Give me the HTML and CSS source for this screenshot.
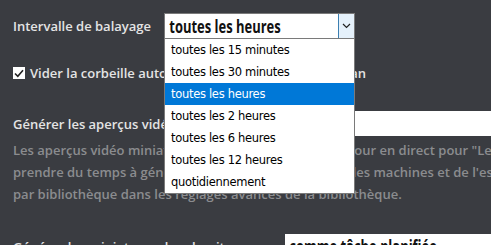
FILE: index.html
```html
<!DOCTYPE html>
<html lang="fr">
<head>
    <meta charset="UTF-8">
    <title>Bibliothèque</title>
    <link rel="stylesheet" href="styles.css">
</head>
<body>
    <div class="settings">
        <div class="row row-interval">
            <label class="label">Intervalle de balayage</label>
            <div class="select select-interval">
                <span class="select-value">toutes les heures</span>
                <span class="select-arrow">
                    <svg width="9" height="6" viewBox="0 0 9 6"><path d="M1 1 L4.5 4.5 L8 1" fill="none" stroke="#222" stroke-width="1.2"/></svg>
                </span>
            </div>
            <ul class="dropdown">
                <li>toutes les 15 minutes</li>
                <li>toutes les 30 minutes</li>
                <li class="active">toutes les heures</li>
                <li>toutes les 2 heures</li>
                <li>toutes les 6 heures</li>
                <li>toutes les 12 heures</li>
                <li>quotidiennement</li>
            </ul>
        </div>

        <div class="row row-check">
            <span class="checkbox">
                <svg width="10" height="9" viewBox="0 0 10 9"><path d="M1 4.5 L3.8 7.3 L9 1.2" fill="none" stroke="#222" stroke-width="1.6"/></svg>
            </span>
            <span class="label">Vider la corbeille auto<span class="tight">matiquement après chaque sc</span>an</span>
        </div>

        <div class="row row-field">
            <label class="label field-label">Générer les aperçus vidéo miniatures</label>
            <div class="select select-wide"></div>
        </div>

        <p class="help">Les aperçus vidéo miniatures fournissent des mises à jour en direct pour "Lecture en cours"<br>prendre du temps à générer, exploiter les ressources des machines et de l'espace disque.<br>par bibliothèque dans les réglages avancés de la bibliothèque.</p>

        <div class="row row-field row-chapters">
            <label class="label field-label">Générer les miniatures des chapitres</label>
            <div class="select select-wide">
                <span class="select-value">comme tâche planifiée</span>
            </div>
        </div>
    </div>
</body>
</html>
```

FILE: styles.css
```css
body {
    margin: 0;
    background-color: #3a3c41;
    font-family: "Open Sans", "Noto Sans", sans-serif;
    overflow: hidden;
}
.settings {
    padding: 13px 0 0 13px;
}
.row {
    display: flex;
    align-items: center;
    white-space: nowrap;
}
.label {
    color: #e4e4e4;
    font-size: 13px;
    font-weight: 600;
}
.row-interval {
    position: relative;
    gap: 13px;
}
.select {
    display: flex;
    align-items: center;
    height: 25px;
    background-color: #fff;
    box-sizing: border-box;
}
.select-interval {
    width: 191px;
    border: 1px solid #7a7a7a;
    border-bottom: none;
}
.select-value {
    flex: 1;
    padding-left: 6px;
    color: #111;
    font-size: 18px;
    font-weight: 700;
    line-height: 25px;
    transform: scaleX(0.72);
    transform-origin: left center;
}
.select-arrow {
    display: flex;
    align-items: center;
    justify-content: center;
    width: 15px;
    height: 100%;
    background-color: #e5f1fb;
    border-left: 1px solid #3c7fb1;
}
.dropdown {
    position: absolute;
    left: 151px;
    top: 25px;
    width: 191px;
    margin: 0;
    padding: 0;
    list-style: none;
    background-color: #fff;
    border: 1px solid #7a7a7a;
    box-sizing: border-box;
    z-index: 2;
}
.dropdown li {
    height: 22px;
    line-height: 22px;
    padding-left: 6px;
    color: #000;
    font-family: "DejaVu Sans", sans-serif;
    font-size: 11.5px;
    letter-spacing: -0.3px;
}
.dropdown li.active {
    background-color: #0078d7;
    color: #fff;
}
.row-check {
    margin-top: 24px;
    height: 22px;
    gap: 5px;
}
.tight {
    letter-spacing: -0.25px;
}
.checkbox {
    display: flex;
    align-items: center;
    justify-content: center;
    width: 12px;
    height: 12px;
    background-color: #fff;
}
.row-field {
    margin-top: 27px;
}
.field-label {
    width: 272px;
    flex-shrink: 0;
    overflow: hidden;
}
.select-wide {
    width: 260px;
    flex-shrink: 0;
}
.help {
    margin: 3px 0 0;
    color: #8b8c8f;
    font-size: 13px;
    font-weight: 600;
    line-height: 22px;
    white-space: nowrap;
}
.row-chapters {
    margin-top: 29px;
}
```
